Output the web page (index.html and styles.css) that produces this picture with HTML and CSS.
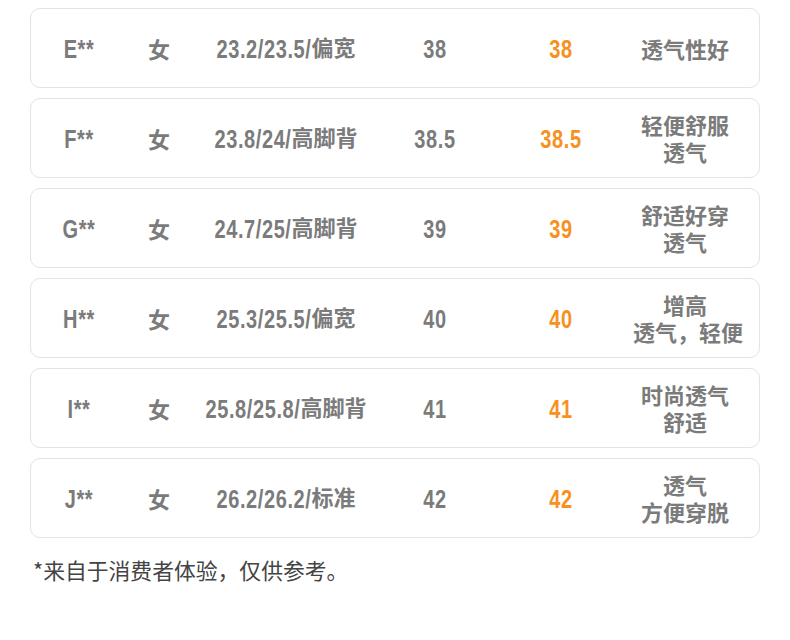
FILE: index.html
```html
<!DOCTYPE html>
<html lang="zh">
<head>
<meta charset="utf-8">
<link rel="stylesheet" href="styles.css">
</head>
<body>
<div class="list">
  <div class="row">
    <div class="c"><span class="n">E**</span></div>
    <div class="c">女</div>
    <div class="c"><span class="n">23.2/23.5/</span>偏宽</div>
    <div class="c"><span class="n">38</span></div>
    <div class="c hl"><span class="n">38</span></div>
    <div class="c desc">透气性好</div>
  </div>
  <div class="row">
    <div class="c"><span class="n">F**</span></div>
    <div class="c">女</div>
    <div class="c"><span class="n">23.8/24/</span>高脚背</div>
    <div class="c"><span class="n">38.5</span></div>
    <div class="c hl"><span class="n">38.5</span></div>
    <div class="c desc">轻便舒服<br>透气</div>
  </div>
  <div class="row">
    <div class="c"><span class="n">G**</span></div>
    <div class="c">女</div>
    <div class="c"><span class="n">24.7/25/</span>高脚背</div>
    <div class="c"><span class="n">39</span></div>
    <div class="c hl"><span class="n">39</span></div>
    <div class="c desc">舒适好穿<br>透气</div>
  </div>
  <div class="row">
    <div class="c"><span class="n">H**</span></div>
    <div class="c">女</div>
    <div class="c"><span class="n">25.3/25.5/</span>偏宽</div>
    <div class="c"><span class="n">40</span></div>
    <div class="c hl"><span class="n">40</span></div>
    <div class="c desc">增高<br>透气，轻便</div>
  </div>
  <div class="row">
    <div class="c"><span class="n">I**</span></div>
    <div class="c">女</div>
    <div class="c"><span class="n">25.8/25.8/</span>高脚背</div>
    <div class="c"><span class="n">41</span></div>
    <div class="c hl"><span class="n">41</span></div>
    <div class="c desc">时尚透气<br>舒适</div>
  </div>
  <div class="row">
    <div class="c"><span class="n">J**</span></div>
    <div class="c">女</div>
    <div class="c"><span class="n">26.2/26.2/</span>标准</div>
    <div class="c"><span class="n">42</span></div>
    <div class="c hl"><span class="n">42</span></div>
    <div class="c desc">透气<br>方便穿脱</div>
  </div>
</div>
<p class="note">*来自于消费者体验，仅供参考。</p>
</body>
</html>
```
FILE: styles.css
```css
* { box-sizing: border-box; }
html, body { margin: 0; background: #fff; }
body {
  padding: 8px 30px 0 30px;
  font-family: "Noto Sans CJK SC", sans-serif;
}
.list {
  display: flex;
  flex-direction: column;
  gap: 10px;
  width: 730px;
}
.row {
  display: grid;
  grid-template-columns: 96px 64px 190px 108px 144px 104px;
  align-items: center;
  height: 80px;
  border: 1px solid #e3e3e3;
  border-radius: 10px;
  color: #7b7b7b;
  font-family: "Noto Sans CJK SC", sans-serif;
  font-size: 22px;
  font-weight: 700;
}
.c {
  text-align: center;
  white-space: nowrap;
  line-height: 27px;
}
.n {
  display: inline-block;
  font-family: "Liberation Sans", Arial, sans-serif;
  font-size: 20px;
  letter-spacing: 0.6px;
  transform: scaleY(1.3);
}
.hl { color: #f7901e; }
.desc { font-size: 22px; }
.note {
  margin: 16px 0 0 3px;
  font-size: 21.8px;
  color: #444;
  font-weight: 400;
  font-family: "Noto Sans CJK SC", sans-serif;
}
```
